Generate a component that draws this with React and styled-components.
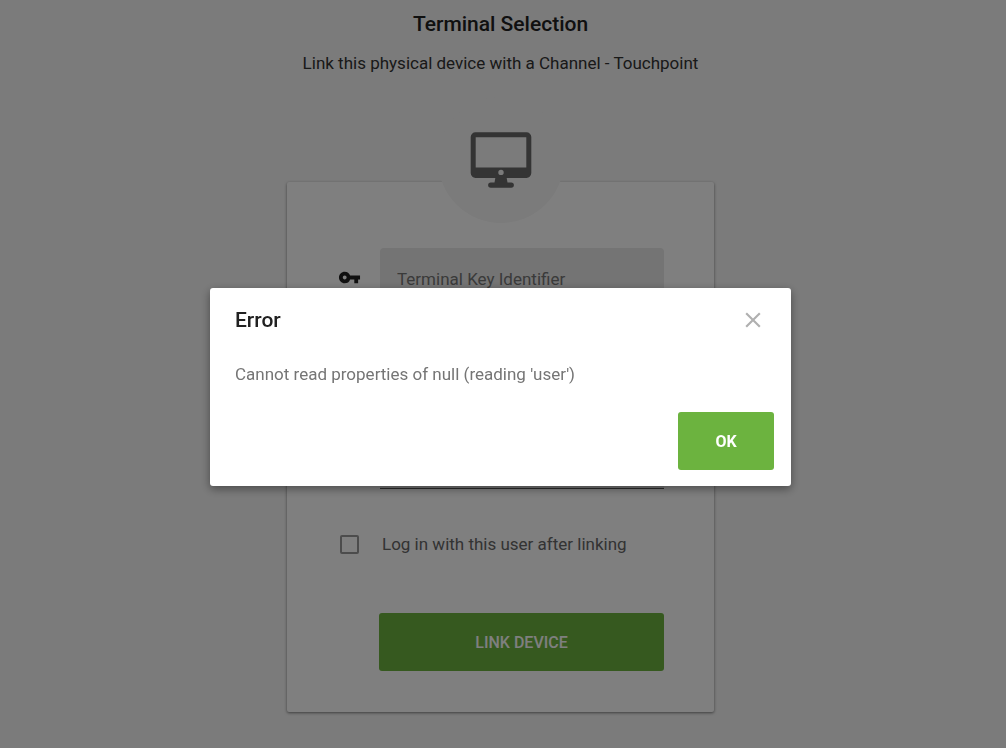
import React, { useState } from "react";
import styled, { createGlobalStyle } from "styled-components";
import { MdClose, MdLock, MdPerson, MdVpnKey } from "react-icons/md";

const App = () => {
	const [open, setOpen] = useState(true);
	const [login, setLogin] = useState(false);

	return (
		<>
			<GlobalStyle />
			<Page>
				<Title>Terminal Selection</Title>
				<Subtitle>Link this physical device with a Channel - Touchpoint</Subtitle>

				<Card onSubmit={(e) => e.preventDefault()}>
					<Badge>
						<MonitorIcon />
					</Badge>

					<Fields>
						<Field icon={<MdVpnKey />} label="Terminal Key Identifier" />
						<Field icon={<MdPerson />} label="Username" />
						<Field icon={<MdLock />} label="Password" type="password" />
					</Fields>

					<CheckRow>
						<IconCell>
							<Checkbox
								type="checkbox"
								checked={login}
								onChange={(e) => setLogin(e.target.checked)}
							/>
						</IconCell>
						<CheckText>Log in with this user after linking</CheckText>
					</CheckRow>

					<Submit>
						<Button type="submit" $wide>
							LINK DEVICE
						</Button>
					</Submit>
				</Card>
			</Page>

			{open && (
				<Overlay>
					<Modal role="dialog" aria-modal="true" aria-labelledby="error-title">
						<ModalHeader>
							<ModalTitle id="error-title">Error</ModalTitle>
							<CloseButton aria-label="Close" onClick={() => setOpen(false)}>
								<MdClose />
							</CloseButton>
						</ModalHeader>
						<Message>Cannot read properties of null (reading 'user')</Message>
						<Actions>
							<Button type="button" onClick={() => setOpen(false)}>
								OK
							</Button>
						</Actions>
					</Modal>
				</Overlay>
			)}
		</>
	);
};

export default App;

const Field = ({ icon, label, type = "text" }) => (
	<FieldRow>
		<IconCell>{icon}</IconCell>
		<Input type={type} placeholder={label} aria-label={label} />
	</FieldRow>
);

const MonitorIcon = () => (
	<svg width="62" height="56" viewBox="0 0 62 56" fill="#686868">
		<path
			fillRule="evenodd"
			d="M5.5 0.3h51a4.8 4.8 0 0 1 4.8 4.8v36a4.8 4.8 0 0 1-4.8 4.8h-51a4.8 4.8 0 0 1-4.8-4.8v-36a4.8 4.8 0 0 1 4.8-4.8zM5.7 5.2v30.2h50.6v-30.2zM31 37.7a2.7 2.7 0 1 0 0 5.4a2.7 2.7 0 1 0 0-5.4z"
		/>
		<path d="M25.5 45h11l1 5.4h3.7a2.7 2.7 0 0 1 0 5.4h-20.4a2.7 2.7 0 0 1 0-5.4h3.7z" />
	</svg>
);

const GlobalStyle = createGlobalStyle`
	* {
		box-sizing: border-box;
	}
	body {
		margin: 0;
		background: #f6f6f6;
		font-family: Roboto, "Liberation Sans", sans-serif;
		font-size: 17px;
		line-height: 24px;
		color: #212121;
	}
`;

const Page = styled.main`
	display: flex;
	flex-direction: column;
	align-items: center;
	padding: 10px 5px 36px 0;
`;

const Title = styled.h1`
	margin: 0;
	font-size: 21px;
	line-height: 28px;
	font-weight: 500;
`;

const Subtitle = styled.p`
	margin: 13px 0 0;
	color: #333;
`;

const Card = styled.form`
	width: 100%;
	max-width: 427px;
	margin-top: 107px;
	padding: 0 50px 41px;
	background: #fff;
	border-radius: 2px;
	box-shadow: 0 1px 3px rgba(0, 0, 0, 0.5);
`;

const Badge = styled.div`
	width: 126px;
	height: 126px;
	margin: -85px auto 0;
	border-radius: 50%;
	background: #f6f6f6;
	display: flex;
	align-items: center;
	justify-content: center;
`;

const Fields = styled.div`
	display: flex;
	flex-direction: column;
	gap: 26px;
	margin-top: 25px;
`;

const FieldRow = styled.div`
	display: flex;
	svg {
		margin-bottom: 4px;
	}
`;

const IconCell = styled.span`
	width: 43px;
	flex: none;
	display: flex;
	align-items: center;
	padding-left: 1px;
	font-size: 23px;
`;

const Input = styled.input`
	flex: 1;
	min-width: 0;
	height: 63px;
	padding: 0 17px;
	border: 0;
	border-bottom: 1px solid #555;
	border-radius: 4px 4px 0 0;
	background: #e8e8e8;
	font: inherit;
	&::placeholder {
		color: #757575;
		opacity: 1;
	}
`;

const CheckRow = styled.label`
	display: flex;
	align-items: center;
	margin-top: 43px;
	color: #666;
	cursor: pointer;
`;

const CheckText = styled.span`
	padding-left: 2px;
`;

const Checkbox = styled.input`
	appearance: none;
	width: 19px;
	height: 19px;
	margin: 0 0 0 2px;
	border: 2px solid #999;
	border-radius: 2px;
	cursor: pointer;
	&:checked {
		background: #6cb33f;
		border-color: #6cb33f;
	}
`;

const Submit = styled.div`
	margin: 57px 0 0 42px;
`;

const Button = styled.button`
	width: ${({ $wide }) => ($wide ? "100%" : "96px")};
	height: 58px;
	border: 0;
	border-radius: 3px;
	background: #6cb33f;
	color: #fff;
	font-family: inherit;
	font-size: 16px;
	font-weight: ${({ $wide }) => ($wide ? 500 : 700)};
	cursor: pointer;
	&:active {
		opacity: 0.8;
	}
`;

const Overlay = styled.div`
	position: fixed;
	inset: 0;
	display: flex;
	align-items: center;
	justify-content: center;
	padding: 26px 5px 0 0;
	background: rgba(0, 0, 0, 0.5);
`;

const Modal = styled.section`
	width: 100%;
	max-width: 581px;
	padding: 16px 17px 16px 25px;
	border-radius: 3px;
	background: #fff;
	box-shadow: 0 3px 10px rgba(0, 0, 0, 0.4);
`;

const ModalHeader = styled.header`
	display: flex;
	align-items: center;
	justify-content: space-between;
	padding-right: 8px;
`;

const ModalTitle = styled.h2`
	margin: 0;
	font-size: 21px;
	line-height: 32px;
	font-weight: 500;
`;

const CloseButton = styled.button`
	display: flex;
	padding: 0;
	border: 0;
	background: none;
	color: #b0b0b0;
	font-size: 26px;
	cursor: pointer;
`;

const Message = styled.p`
	margin: 26px 0;
	color: #757575;
`;

const Actions = styled.footer`
	display: flex;
	justify-content: flex-end;
`;
